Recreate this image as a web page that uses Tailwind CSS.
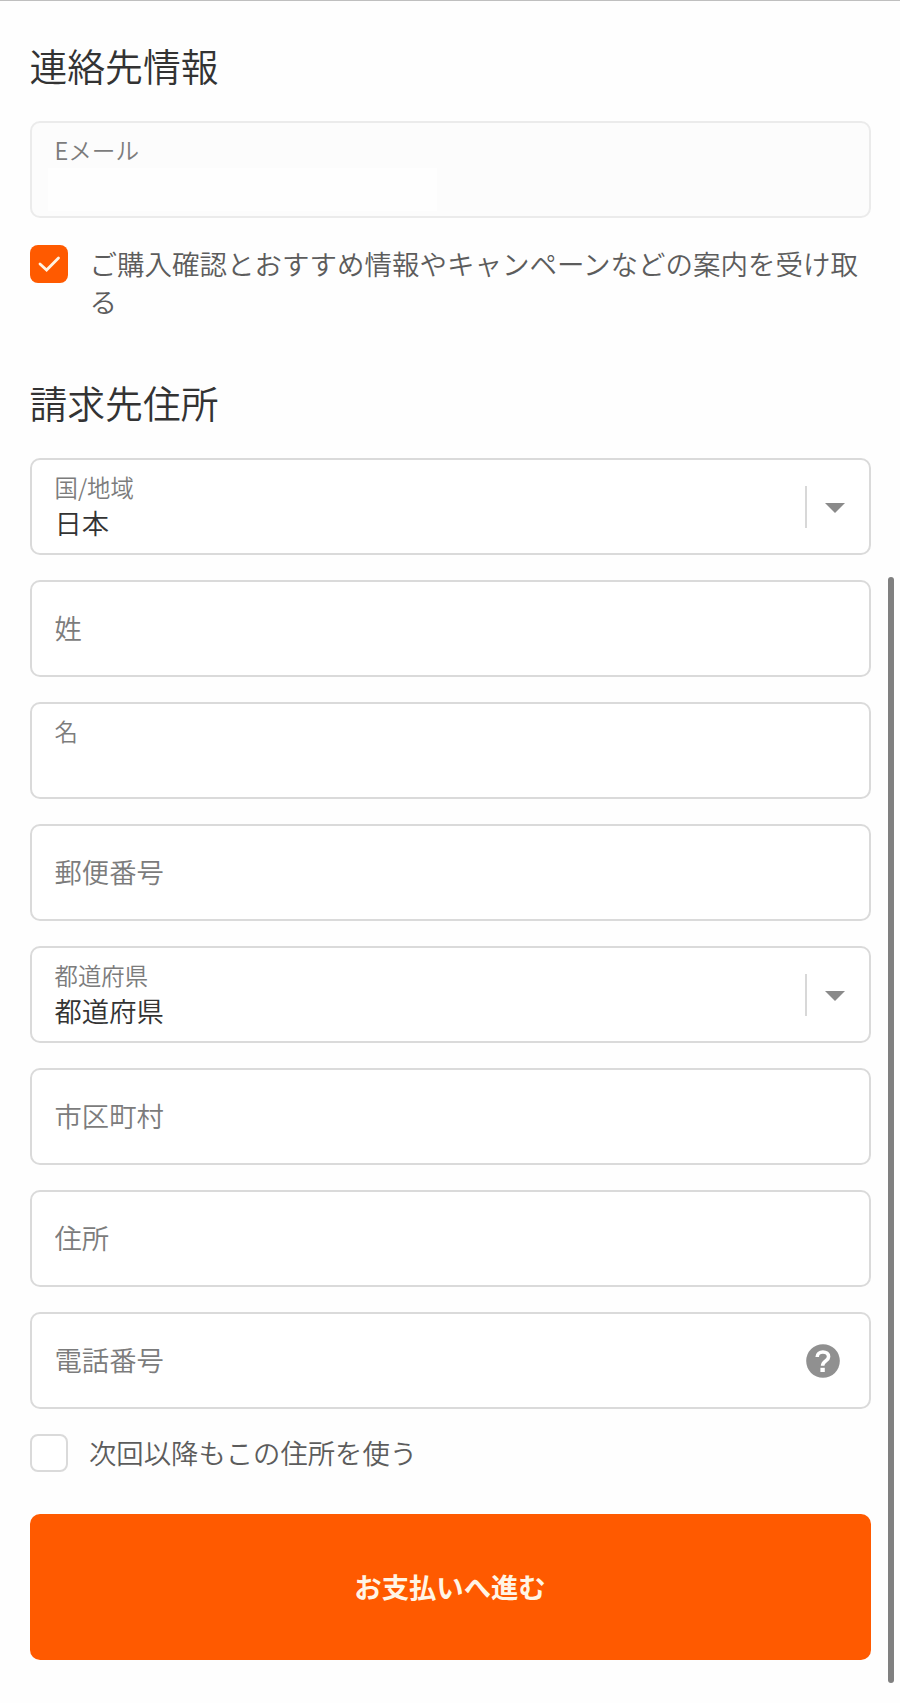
<!DOCTYPE html>
<html lang="ja">
  <head>
    <meta charset="UTF-8" />
    <meta name="viewport" content="width=device-width, initial-scale=1.0" />
    <title>請求先住所</title>
    <script src="https://cdn.jsdelivr.net/npm/@tailwindcss/browser@4"></script>
  </head>
  <body
    class="relative h-[1703px] overflow-hidden border-t border-[#bfbfbf] bg-[#fefefe] font-['Noto_Sans_CJK_JP',sans-serif] text-[27.35px] font-[350] text-[#5c5c5c]"
  >
    <form class="w-[870.5px] pl-[29.5px] pt-10">
      <!-- 連絡先情報 -->
      <h2 class="mb-8 text-[37.8px] leading-[48px] text-[#333]">連絡先情報</h2>
      <div class="h-[97px] rounded-[10px] border-2 border-[#ebebeb] bg-[#fcfcfc] px-4 pt-[9px]">
        <label for="email" class="block pl-[7px] text-[23.6px] leading-9 text-[#7c7c7c]">Eメール</label>
        <input type="email" id="email" name="email" disabled class="block h-[43px] w-[389px] bg-[#fefefe]" />
      </div>
      <label class="mt-[26px] flex items-start">
        <input type="checkbox" name="news" checked class="sr-only" />
        <span class="mt-[1px] flex size-[38px] shrink-0 items-center justify-center rounded-[8px] bg-[#ff5a00]">
          <svg class="size-[38px]" viewBox="0 0 38 38" fill="none" stroke="#fff3e3" stroke-width="2.8" stroke-linecap="round">
            <path d="M10 19l6.6 6L28.5 13" />
          </svg>
        </span>
        <span class="ml-[22px] whitespace-nowrap text-[27.5px] leading-[38px]">ご購入確認とおすすめ情報やキャンペーンなどの案内を受け取<br />る</span>
      </label>

      <!-- 請求先住所 -->
      <h2 class="mb-8 mt-[58px] text-[37.8px] leading-[48px] text-[#333]">請求先住所</h2>
      <div class="flex flex-col gap-[25px]">
        <div class="flex h-[97px] items-center rounded-[10px] border-2 border-[#dadada] bg-white pl-[23px] pr-6">
          <div class="flex-1 pb-1">
            <p class="text-[23.4px] leading-[34px] text-[#7c7c7c]">国/地域</p>
            <p class="leading-9 text-[#333]">日本</p>
          </div>
          <span class="mr-[18px] h-[42px] w-[2px] bg-[#d8d8d8]"></span>
          <svg class="mt-[2px] h-[10px] w-5" viewBox="0 0 20 10" fill="#8a8a8a"><path d="M0 0h20L10 10z" /></svg>
        </div>

        <div class="flex h-[97px] items-center rounded-[10px] border-2 border-[#dadada] bg-white px-[23px] pb-0.5">
          <input type="text" name="last_name" placeholder="姓" class="w-full placeholder:text-[#7c7c7c]" />
        </div>

        <div class="h-[97px] rounded-[10px] border-2 border-[#dadada] bg-white px-[23px] pt-[9px]">
          <label for="first_name" class="block text-[23.4px] leading-9 text-[#7c7c7c]">名</label>
          <input type="text" id="first_name" name="first_name" class="block h-9 w-full" />
        </div>

        <div class="flex h-[97px] items-center rounded-[10px] border-2 border-[#dadada] bg-white px-[23px] pb-0.5">
          <input type="text" name="zip" placeholder="郵便番号" class="w-full placeholder:text-[#7c7c7c]" />
        </div>

        <div class="flex h-[97px] items-center rounded-[10px] border-2 border-[#dadada] bg-white pl-[23px] pr-6">
          <div class="flex-1 pb-1">
            <p class="text-[23.4px] leading-[34px] text-[#7c7c7c]">都道府県</p>
            <p class="leading-9 text-[#333]">都道府県</p>
          </div>
          <span class="mr-[18px] h-[42px] w-[2px] bg-[#d8d8d8]"></span>
          <svg class="mt-[2px] h-[10px] w-5" viewBox="0 0 20 10" fill="#8a8a8a"><path d="M0 0h20L10 10z" /></svg>
        </div>

        <div class="flex h-[97px] items-center rounded-[10px] border-2 border-[#dadada] bg-white px-[23px] pb-0.5">
          <input type="text" name="city" placeholder="市区町村" class="w-full placeholder:text-[#7c7c7c]" />
        </div>

        <div class="flex h-[97px] items-center rounded-[10px] border-2 border-[#dadada] bg-white px-[23px] pb-0.5">
          <input type="text" name="address" placeholder="住所" class="w-full placeholder:text-[#7c7c7c]" />
        </div>

        <div class="flex h-[97px] items-center rounded-[10px] border-2 border-[#dadada] bg-white pl-[23px] pr-[29px]">
          <input type="tel" name="tel" placeholder="電話番号" class="min-w-0 flex-1 pb-0.5 placeholder:text-[#7c7c7c]" />
          <svg class="size-[34px]" viewBox="0 0 34 34" fill="none">
            <circle cx="17" cy="17" r="16.8" fill="#909090" />
            <path d="M11.2 13C11.2 9.8 13.7 8 16.9 8c3.3 0 5.7 1.8 5.7 4.7 0 4.1-6 4.3-6 9" stroke="#fff" stroke-width="3.6" />
            <path d="M14.4 23.8h4.4v4.2h-4.4z" fill="#fff" />
          </svg>
        </div>
      </div>

      <label class="mt-[25px] flex h-[38px] items-center">
        <input type="checkbox" name="save_address" class="size-[38px] appearance-none rounded-[8px] border-2 border-[#dadada] bg-white" />
        <span class="ml-[21.5px] pb-0.5 leading-[38px]">次回以降もこの住所を使う</span>
      </label>

      <!-- 送信ボタン -->
      <button type="submit" class="mt-[42px] block h-[146px] w-full rounded-[10px] bg-[#ff5a00] font-bold text-[#fff5e6]">
        お支払いへ進む
      </button>
    </form>

    <!-- スクロールバー -->
    <div class="absolute right-[6px] top-[576px] h-[1106px] w-[6px] rounded-full bg-[#808080]"></div>
  </body>
</html>
